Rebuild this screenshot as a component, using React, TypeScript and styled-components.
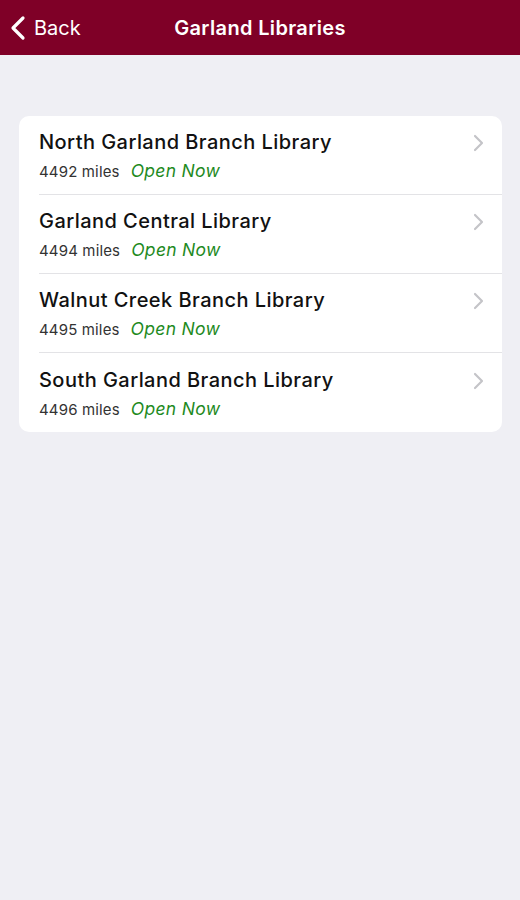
import React from "react";
import styled, { createGlobalStyle } from "styled-components";

const Global = createGlobalStyle`
  html, body { margin: 0; padding: 0; background: #efeff4; }
  body { font-family: "Inter", "Liberation Sans", Arial, sans-serif; -webkit-font-smoothing: antialiased; }
`;

const Page = styled.div`
  width: 520px;
  min-height: 900px;
  background: #efeff4;
`;

const NavBar = styled.header`
  height: 55px;
  background: #7f0027;
  display: grid;
  grid-template-columns: 1fr auto 1fr;
  align-items: center;
  color: #fff;
`;

const BackButton = styled.div`
  display: flex;
  align-items: center;
  gap: 8px;
  padding-left: 10px;
  font-size: 20px;
  color: #fff;
`;

const Title = styled.h1`
  margin: 0;
  font-size: 20px;
  font-weight: 600;
  letter-spacing: 0.35px;
  color: #fff;
`;

const Card = styled.ul`
  list-style: none;
  margin: 61px 18px 0 19px;
  padding: 0 0 0 20px;
  background: #fff;
  border-radius: 10px;
  overflow: hidden;
`;

const Row = styled.li<{ $last?: boolean }>`
  height: 79px;
  box-sizing: border-box;
  display: flex;
  align-items: center;
  padding-right: 18px;
  border-bottom: ${(p) => (p.$last ? "none" : "1px solid #e3e3e6")};
`;

const RowText = styled.div`
  flex: 1;
  display: flex;
  flex-direction: column;
  gap: 6px;
  margin-top: 3px;
`;

const Name = styled.div`
  font-size: 20px;
  line-height: 24px;
  font-weight: 500;
  color: #111;
  letter-spacing: 0.45px;
`;

const Meta = styled.div`
  display: flex;
  align-items: baseline;
  gap: 11px;
  line-height: 22px;
`;

const Miles = styled.span`
  font-size: 15px;
  color: #333;
  letter-spacing: 0.15px;
`;

const Status = styled.span`
  font-size: 17.5px;
  font-style: italic;
  color: #1e8a1e;
  letter-spacing: 0.3px;
`;

const Chevron = () => (
  <svg width="12" height="18" viewBox="0 0 12 18" style={{ marginTop: -24 }}>
    <path d="M3 2 L10 9 L3 16" fill="none" stroke="#c4c4c8" strokeWidth="2.2" strokeLinecap="round" strokeLinejoin="round" />
  </svg>
);

const libraries = [
  { name: "North Garland Branch Library", miles: 4492 },
  { name: "Garland Central Library", miles: 4494 },
  { name: "Walnut Creek Branch Library", miles: 4495 },
  { name: "South Garland Branch Library", miles: 4496 },
];

export default function App() {
  return (
    <Page>
      <Global />
      <NavBar>
        <BackButton>
          <svg width="16" height="26" viewBox="0 0 16 26">
            <path d="M13 3 L3 13 L13 23" fill="none" stroke="#fff" strokeWidth="3.2" strokeLinecap="round" strokeLinejoin="round" />
          </svg>
          Back
        </BackButton>
        <Title>Garland Libraries</Title>
        <div />
      </NavBar>
      <Card>
        {libraries.map((l, i) => (
          <Row key={l.name} $last={i === libraries.length - 1}>
            <RowText>
              <Name>{l.name}</Name>
              <Meta>
                <Miles>{l.miles} miles</Miles>
                <Status>Open Now</Status>
              </Meta>
            </RowText>
            <Chevron />
          </Row>
        ))}
      </Card>
    </Page>
  );
}
